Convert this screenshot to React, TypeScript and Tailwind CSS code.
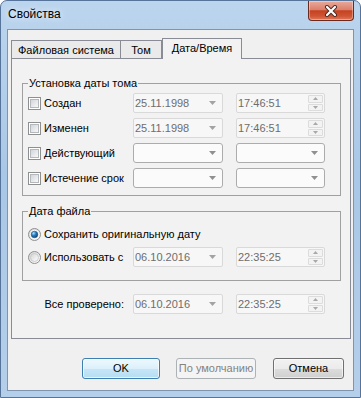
import React from "react";

function Arrow({ color = "#a3a3a3" }: { color?: string }) {
  return (
    <svg width="7" height="4" viewBox="0 0 7 4" className="shrink-0">
      <path d="M0 0H7L3.5 4Z" fill={color} />
    </svg>
  );
}

function SmallArrow({ up }: { up?: boolean }) {
  return (
    <svg width="5" height="3" viewBox="0 0 5 3">
      <path d={up ? "M0 3H5L2.5 0Z" : "M0 0H5L2.5 3Z"} fill="#a8a8a8" />
    </svg>
  );
}

function Checkbox() {
  return (
    <span className="w-[13px] h-[13px] border border-[#8e8f8f] bg-white p-px shrink-0 flex">
      <span className="flex-1 border border-[#b4b8bd] bg-gradient-to-br from-[#d2d6db] to-[#f8f8f8]" />
    </span>
  );
}

function Radio({ checked }: { checked?: boolean }) {
  return (
    <svg width="13" height="13" viewBox="0 0 13 13" className="shrink-0">
      <defs>
        <linearGradient id="rg" x1="0" y1="0" x2="1" y2="1">
          <stop offset="0" stopColor="#d4d4d4" />
          <stop offset="1" stopColor="#ffffff" />
        </linearGradient>
        <radialGradient id="rd" cx="0.35" cy="0.3" r="0.75">
          <stop offset="0" stopColor="#b9e4fb" />
          <stop offset="0.45" stopColor="#2b82c8" />
          <stop offset="1" stopColor="#0b3e70" />
        </radialGradient>
      </defs>
      <circle cx="6.5" cy="6.5" r="6" fill="url(#rg)" stroke="#8e8f8f" />
      {checked ? (
        <>
          <circle cx="6.5" cy="6.5" r="4.4" fill="#fdfdfd" />
          <circle cx="6.5" cy="6.5" r="3.3" fill="url(#rd)" stroke="#1b4d7a" strokeWidth="0.6" />
        </>
      ) : (
        <circle cx="6.5" cy="6.5" r="4" fill="url(#rg)" stroke="#c2c4c6" strokeWidth="0.8" />
      )}
    </svg>
  );
}

function DateCombo({ value }: { value: string }) {
  return (
    <div className="w-[90px] h-[20px] border border-[#d9d9d9] rounded-[2px] bg-[#f7f7f7] flex items-center justify-between pl-[1px] pr-[6px] text-[#6d6d6d]">
      <span>{value}</span>
      <Arrow />
    </div>
  );
}

function EmptyCombo({ wide }: { wide?: boolean }) {
  return (
    <div
      className={
        (wide ? "w-[90px]" : "w-[89px]") +
        " h-[20px] border border-[#acacac] rounded-[3px] bg-[#fbfbfb] flex items-center justify-end pr-[6px]"
      }
    >
      <Arrow color="#909090" />
    </div>
  );
}

function TimeField({ value }: { value: string }) {
  return (
    <div className="w-[89px] h-[20px] border border-[#d9d9d9] rounded-[2px] bg-[#f7f7f7] flex items-stretch pl-[1px] pr-[1px] text-[#6d6d6d]">
      <span className="flex-1 flex items-center">{value}</span>
      <div className="w-[15px] flex flex-col gap-px py-px">
        <div className="flex-1 border border-[#dcdcdc] rounded-[1px] bg-[#f3f3f3] flex items-center justify-center">
          <SmallArrow up />
        </div>
        <div className="flex-1 border border-[#dcdcdc] rounded-[1px] bg-[#f3f3f3] flex items-center justify-center">
          <SmallArrow />
        </div>
      </div>
    </div>
  );
}

const rows = [
  { label: "Создан", date: "25.11.1998", time: "17:46:51" },
  { label: "Изменен", date: "25.11.1998", time: "17:46:51" },
  { label: "Действующий" },
  { label: "Истечение срок" },
];

export default function App() {
  return (
    <div className="w-[361px] h-[398px] relative overflow-hidden rounded-t-[7px] border border-[#56739a] bg-[linear-gradient(180deg,#bcd5ee,#a9c7e6_45%,#b5cfea)] font-['Liberation_Sans',Arial,sans-serif] text-[11px] leading-[13px] text-black">
      {/* title bar */}
      <div className="h-[28px] flex items-center pl-[7px] pb-[1px]">
        <span className="text-[12px] [text-shadow:0_0_6px_rgba(255,255,255,0.95)]">Свойства</span>
      </div>
      {/* close button */}
      <div className="absolute top-0 right-[6px] w-[46px] h-[20px] rounded-b-[4px] border border-t-0 border-[#6b2a1f] bg-[linear-gradient(180deg,#e9aa9c,#dc806d_45%,#c5421f_52%,#cf5535_80%,#e07a5a)] flex items-center justify-center shadow-[inset_0_0_0_1px_rgba(255,255,255,0.35)]">
        <svg width="14" height="12" viewBox="0 0 14 12">
          <path d="M3 2L11 10M11 2L3 10" stroke="#4a2a24" strokeWidth="4" strokeLinecap="round" />
          <path d="M3 2L11 10M11 2L3 10" stroke="#ffffff" strokeWidth="2.2" strokeLinecap="round" />
        </svg>
      </div>

      {/* client area */}
      <div className="mx-[6px] h-[362px] border border-[#7f95ad] bg-[#f0f0f0] pt-[8px] pl-[3px] pr-[2px] flex flex-col">
        {/* tabs */}
        <div className="flex items-end h-[20px] relative z-10">
          <div className="w-[110px] h-[18px] border border-b-0 border-[#898c95] bg-[#eaeaea] flex items-center justify-center pt-[1px]">
            Файловая система
          </div>
          <div className="w-[41px] h-[18px] border border-l-0 border-b-0 border-[#898c95] bg-[#eaeaea] flex items-center justify-center pt-[1px]">
            Том
          </div>
          <div className="w-[80px] h-[21px] -mb-px border border-b-0 border-[#898c95] bg-[#f2f2f2] flex items-center justify-center pb-[2px]">
            Дата/Время
          </div>
        </div>
        {/* panel */}
        <div className="h-[281px] border border-[#898c95] bg-[#f2f2f2] px-[10px] pr-[9px] flex flex-col">
          <fieldset className="mt-[18px] border border-[#a0a0a0] px-[5px] pt-[3px] pb-[7px] flex flex-col gap-[5px]">
            <legend className="px-px leading-[13px]">Установка даты тома</legend>
            {rows.map((r) => (
              <div key={r.label} className="flex items-center h-[20px]">
                <div className="w-[105px] flex items-center gap-[3px]">
                  <Checkbox />
                  <span>{r.label}</span>
                </div>
                {r.date ? <DateCombo value={r.date} /> : <EmptyCombo wide />}
                <div className="ml-[13px]">
                  {r.time ? <TimeField value={r.time} /> : <EmptyCombo />}
                </div>
              </div>
            ))}
          </fieldset>

          <fieldset className="mt-[9px] border border-[#a0a0a0] px-[5px] pt-[6px] pb-[13px] flex flex-col gap-[3px]">
            <legend className="px-px leading-[13px]">Дата файла</legend>
            <div className="flex items-center h-[20px] gap-[3px]">
              <Radio checked />
              <span>Сохранить оригинальную дату</span>
            </div>
            <div className="flex items-center h-[20px]">
              <div className="w-[105px] flex items-center gap-[3px]">
                <Radio />
                <span>Использовать с</span>
              </div>
              <DateCombo value="06.10.2016" />
              <div className="ml-[13px]">
                <TimeField value="22:35:25" />
              </div>
            </div>
          </fieldset>

          <div className="mt-[13px] h-[20px] flex items-center -ml-[10px]">
            <div className="w-[121px] flex justify-end pr-[9px]">Все проверено:</div>
            <DateCombo value="06.10.2016" />
            <div className="ml-[13px]">
              <TimeField value="22:35:25" />
            </div>
          </div>
        </div>

        {/* buttons */}
        <div className="mt-[19px] flex justify-end pr-[7px]">
          <div className="w-[78px] h-[21px] rounded-[3px] border border-[#3c7fb1] bg-[linear-gradient(180deg,#eef8fd,#dcf0fb_50%,#c6e6f7_52%,#b5ddf3)] shadow-[inset_0_0_0_1px_rgba(255,255,255,0.7)] flex items-center justify-center">
            OK
          </div>
          <div className="ml-[16px] w-[80px] h-[21px] rounded-[3px] border border-[#adb2b5] bg-[#f4f4f4] text-[#838383] flex items-center justify-center">
            По умолчанию
          </div>
          <div className="ml-[17px] w-[71px] h-[21px] rounded-[3px] border border-[#707070] bg-[linear-gradient(180deg,#f2f2f2,#ebebeb_50%,#dddddd_50%,#cfcfcf)] shadow-[inset_0_0_0_1px_rgba(255,255,255,0.6)] flex items-center justify-center">
            Отмена
          </div>
        </div>
      </div>
    </div>
  );
}
